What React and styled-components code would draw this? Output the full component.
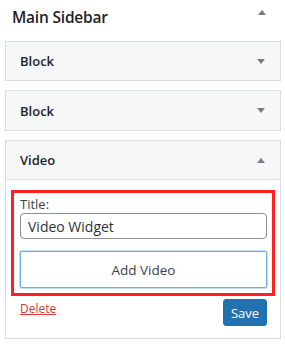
import React from "react";
import styled, { createGlobalStyle } from "styled-components";

const Global = createGlobalStyle`
  html, body { margin: 0; padding: 0; background: #fff; }
  body { font-family: "Open Sans", "Noto Sans", sans-serif; color: #1d2327; }
  * { box-sizing: border-box; }
`;

const Page = styled.div`
  width: 285px;
  padding: 0 4px 0 5px;
`;

const Header = styled.div`
  height: 41px;
  display: flex;
  align-items: flex-start;
  justify-content: space-between;
  padding: 6px 15px 0 7px;
`;

const Title = styled.h2`
  margin: 0;
  font-size: 15.5px;
  line-height: 22px;
  font-weight: 600;
  color: #1d2327;
  letter-spacing: -0.2px;
`;

const Arrow = styled.span`
  width: 0;
  height: 0;
  margin-top: ${(p) => p.$mt || 0}px;
  border-left: 4px solid transparent;
  border-right: 4px solid transparent;
  ${(p) =>
    p.$up
      ? "border-bottom: 5px solid #787c82;"
      : "border-top: 5px solid #787c82;"}
`;

const Panel = styled.div`
  border: 1px solid #dcdcde;
  background: #fff;
  margin-bottom: 9px;
`;

const PanelHead = styled.div`
  height: ${(p) => p.$h}px;
  background: #f6f7f7;
  display: flex;
  align-items: center;
  justify-content: space-between;
  padding: 0 15px 0 14px;
`;

const PanelTitle = styled.span`
  font-size: 13px;
  font-weight: 600;
  color: #1d2327;
`;

const PanelBody = styled.div`
  border-top: 1px solid #dcdcde;
  padding: 10px 5px 12px 5px;
`;

const Highlight = styled.div`
  border: 3px solid #ff1f1f;
  padding: 3px 5px 5px 6px;
  display: flex;
  flex-direction: column;
`;

const Label = styled.label`
  font-size: 13px;
  color: #3c434a;
  line-height: 17px;
  margin-bottom: 0;
`;

const Input = styled.input`
  height: 26px;
  width: 100%;
  border: 1px solid #8c8f94;
  border-radius: 4px;
  padding: 0 7px;
  font-family: inherit;
  font-size: 14px;
  color: #2c3338;
  outline: none;
  margin-bottom: 12px;
`;

const AddButton = styled.button`
  height: 37px;
  width: 100%;
  background: #fff;
  border: 1px solid #72aee6;
  box-shadow: 0 0 0 1px #c5dcf2;
  border-radius: 2px;
  font-family: inherit;
  font-size: 13.5px;
  color: #3c434a;
`;

const Actions = styled.div`
  display: flex;
  justify-content: space-between;
  align-items: flex-start;
  padding: 3px 8px 0 9px;
`;

const DeleteLink = styled.a`
  font-size: 12px;
  line-height: 16px;
  color: #d63638;
  text-decoration: underline;
  margin-top: 2px;
`;

const SaveButton = styled.button`
  height: 27px;
  width: 44px;
  background: #2271b1;
  border: 1px solid #2271b1;
  border-radius: 3px;
  color: #fff;
  font-family: inherit;
  font-size: 13px;
  padding: 0;
`;

export default function App() {
  return (
    <>
      <Global />
      <Page>
        <Header>
          <Title>Main Sidebar</Title>
          <Arrow $up $mt={4} />
        </Header>
        <Panel>
          <PanelHead $h={38}>
            <PanelTitle>Block</PanelTitle>
            <Arrow />
          </PanelHead>
        </Panel>
        <Panel>
          <PanelHead $h={39}>
            <PanelTitle>Block</PanelTitle>
            <Arrow />
          </PanelHead>
        </Panel>
        <Panel>
          <PanelHead $h={38}>
            <PanelTitle>Video</PanelTitle>
            <Arrow $up />
          </PanelHead>
          <PanelBody>
            <Highlight>
              <Label>Title:</Label>
              <Input defaultValue="Video Widget" />
              <AddButton>Add Video</AddButton>
            </Highlight>
            <Actions>
              <DeleteLink href="#">Delete</DeleteLink>
              <SaveButton>Save</SaveButton>
            </Actions>
          </PanelBody>
        </Panel>
      </Page>
    </>
  );
}
